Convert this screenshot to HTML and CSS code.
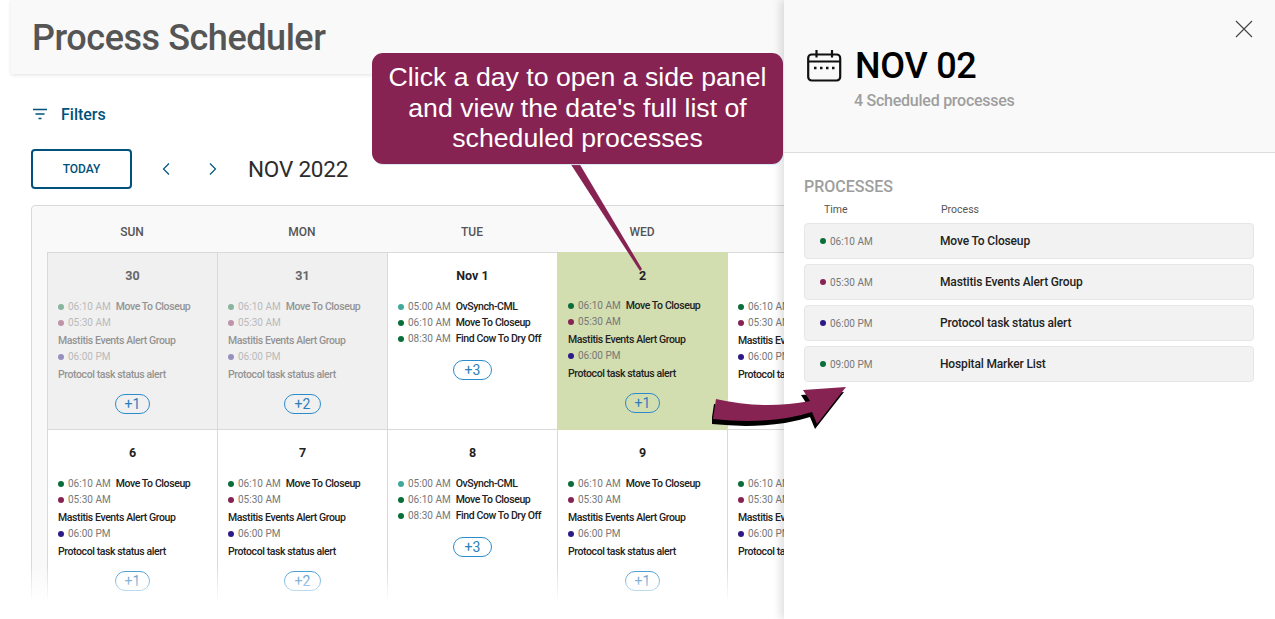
FILE: index.html
```html
<!DOCTYPE html>
<html lang="en">
<head>
    <meta charset="UTF-8">
    <title>Process Scheduler</title>
    <link rel="stylesheet" href="styles.css">
</head>
<body>
    <div class="page">
        <header class="page-header">
            <h1>Process Scheduler</h1>
        </header>

        <div class="filters">
            <svg class="filters-icon" width="16" height="12" viewBox="0 0 16 12"><path d="M1 1.500h14M3.500 6h9M6.500 10.500h3" stroke="#00527c" stroke-width="1.500" fill="none"/></svg>
            <span>Filters</span>
        </div>

        <div class="toolbar">
            <button class="today-button">TODAY</button>
            <svg class="chevron chevron-prev" width="8" height="14" viewBox="0 0 8 14"><path d="M7 1.500 1.500 7 7 12.500" stroke="#00527c" stroke-width="1.200" fill="none"/></svg>
            <svg class="chevron chevron-next" width="8" height="14" viewBox="0 0 8 14"><path d="M1 1.500 6.500 7 1 12.500" stroke="#00527c" stroke-width="1.200" fill="none"/></svg>
            <span class="month-label">NOV 2022</span>
        </div>

        <div class="calendar">
            <div class="weekdays">
                <div>SUN</div>
                <div>MON</div>
                <div>TUE</div>
                <div>WED</div>
                <div>THU</div>
            </div>
            <div class="days">
                <div class="day day-muted">
                    <div class="day-number">30</div>
                    <div class="entry"><i class="dot dot-green"></i><span class="time">06:10 AM</span><span class="name">Move To Closeup</span></div>
                    <div class="entry"><i class="dot dot-wine"></i><span class="time">05:30 AM</span><span class="name name-wrapped">Mastitis Events Alert Group</span></div>
                    <div class="entry"><i class="dot dot-indigo"></i><span class="time">06:00 PM</span><span class="name name-wrapped">Protocol task status alert</span></div>
                    <div class="more"><span>+1</span></div>
                </div>
                <div class="day day-muted">
                    <div class="day-number">31</div>
                    <div class="entry"><i class="dot dot-green"></i><span class="time">06:10 AM</span><span class="name">Move To Closeup</span></div>
                    <div class="entry"><i class="dot dot-wine"></i><span class="time">05:30 AM</span><span class="name name-wrapped">Mastitis Events Alert Group</span></div>
                    <div class="entry"><i class="dot dot-indigo"></i><span class="time">06:00 PM</span><span class="name name-wrapped">Protocol task status alert</span></div>
                    <div class="more more-two"><span>+2</span></div>
                </div>
                <div class="day">
                    <div class="day-number">Nov 1</div>
                    <div class="entry"><i class="dot dot-teal"></i><span class="time">05:00 AM</span><span class="name">OvSynch-CML</span></div>
                    <div class="entry"><i class="dot dot-green"></i><span class="time">06:10 AM</span><span class="name">Move To Closeup</span></div>
                    <div class="entry"><i class="dot dot-green"></i><span class="time">08:30 AM</span><span class="name">Find Cow To Dry Off</span></div>
                    <div class="more more-short"><span>+3</span></div>
                </div>
                <div class="day day-selected">
                    <div class="day-number">2</div>
                    <div class="entry"><i class="dot dot-green"></i><span class="time">06:10 AM</span><span class="name">Move To Closeup</span></div>
                    <div class="entry"><i class="dot dot-wine"></i><span class="time">05:30 AM</span><span class="name name-wrapped">Mastitis Events Alert Group</span></div>
                    <div class="entry"><i class="dot dot-indigo"></i><span class="time">06:00 PM</span><span class="name name-wrapped">Protocol task status alert</span></div>
                    <div class="more"><span>+1</span></div>
                </div>
                <div class="day">
                    <div class="day-number">3</div>
                    <div class="entry"><i class="dot dot-green"></i><span class="time">06:10 AM</span><span class="name">Move To Closeup</span></div>
                    <div class="entry"><i class="dot dot-wine"></i><span class="time">05:30 AM</span><span class="name name-wrapped">Mastitis Events Alert Group</span></div>
                    <div class="entry"><i class="dot dot-indigo"></i><span class="time">06:00 PM</span><span class="name name-wrapped">Protocol task status alert</span></div>
                    <div class="more"><span>+1</span></div>
                </div>

                <div class="day">
                    <div class="day-number">6</div>
                    <div class="entry"><i class="dot dot-green"></i><span class="time">06:10 AM</span><span class="name">Move To Closeup</span></div>
                    <div class="entry"><i class="dot dot-wine"></i><span class="time">05:30 AM</span><span class="name name-wrapped">Mastitis Events Alert Group</span></div>
                    <div class="entry"><i class="dot dot-indigo"></i><span class="time">06:00 PM</span><span class="name name-wrapped">Protocol task status alert</span></div>
                    <div class="more"><span>+1</span></div>
                </div>
                <div class="day">
                    <div class="day-number">7</div>
                    <div class="entry"><i class="dot dot-green"></i><span class="time">06:10 AM</span><span class="name">Move To Closeup</span></div>
                    <div class="entry"><i class="dot dot-wine"></i><span class="time">05:30 AM</span><span class="name name-wrapped">Mastitis Events Alert Group</span></div>
                    <div class="entry"><i class="dot dot-indigo"></i><span class="time">06:00 PM</span><span class="name name-wrapped">Protocol task status alert</span></div>
                    <div class="more more-two"><span>+2</span></div>
                </div>
                <div class="day">
                    <div class="day-number">8</div>
                    <div class="entry"><i class="dot dot-teal"></i><span class="time">05:00 AM</span><span class="name">OvSynch-CML</span></div>
                    <div class="entry"><i class="dot dot-green"></i><span class="time">06:10 AM</span><span class="name">Move To Closeup</span></div>
                    <div class="entry"><i class="dot dot-green"></i><span class="time">08:30 AM</span><span class="name">Find Cow To Dry Off</span></div>
                    <div class="more more-short"><span>+3</span></div>
                </div>
                <div class="day">
                    <div class="day-number">9</div>
                    <div class="entry"><i class="dot dot-green"></i><span class="time">06:10 AM</span><span class="name">Move To Closeup</span></div>
                    <div class="entry"><i class="dot dot-wine"></i><span class="time">05:30 AM</span><span class="name name-wrapped">Mastitis Events Alert Group</span></div>
                    <div class="entry"><i class="dot dot-indigo"></i><span class="time">06:00 PM</span><span class="name name-wrapped">Protocol task status alert</span></div>
                    <div class="more"><span>+1</span></div>
                </div>
                <div class="day">
                    <div class="day-number">10</div>
                    <div class="entry"><i class="dot dot-green"></i><span class="time">06:10 AM</span><span class="name">Move To Closeup</span></div>
                    <div class="entry"><i class="dot dot-wine"></i><span class="time">05:30 AM</span><span class="name name-wrapped">Mastitis Events Alert Group</span></div>
                    <div class="entry"><i class="dot dot-indigo"></i><span class="time">06:00 PM</span><span class="name name-wrapped">Protocol task status alert</span></div>
                    <div class="more"><span>+1</span></div>
                </div>
            </div>
        </div>
        <div class="bottom-fade"></div>

        <aside class="side-panel">
            <div class="panel-header">
                <svg class="panel-close" width="18" height="18" viewBox="0 0 18 18"><path d="M1 1l16 16M17 1 1 17" stroke="#444" stroke-width="1.100" fill="none"/></svg>
                <div class="panel-title">
                    <svg class="panel-icon" width="35" height="32" viewBox="0 0 35 32"><rect x="1.200" y="4.500" width="32" height="26" rx="3.500" stroke="#111" stroke-width="2.200" fill="none"/><path d="M1.200 11.500h32M9.500 0v7.500M25 0v7.500" stroke="#111" stroke-width="2.200" fill="none"/><path d="M7 18h2.500M13 18h2.500M19 18h2.500M25 18h2.500" stroke="#111" stroke-width="2.400" fill="none"/></svg>
                    <span>NOV 02</span>
                </div>
                <div class="panel-subtitle">4 Scheduled processes</div>
            </div>
            <div class="panel-body">
                <h2>PROCESSES</h2>
                <div class="process-head">
                    <span class="process-head-time">Time</span>
                    <span>Process</span>
                </div>
                <div class="process-row"><i class="dot dot-green"></i><span class="time">06:10 AM</span><span class="process-name">Move To Closeup</span></div>
                <div class="process-row"><i class="dot dot-wine"></i><span class="time">05:30 AM</span><span class="process-name">Mastitis Events Alert Group</span></div>
                <div class="process-row"><i class="dot dot-indigo"></i><span class="time">06:00 PM</span><span class="process-name">Protocol task status alert</span></div>
                <div class="process-row"><i class="dot dot-green"></i><span class="time">09:00 PM</span><span class="process-name">Hospital Marker List</span></div>
            </div>
        </aside>

        <!-- callout and arrow sit on top of everything -->
        <svg class="callout-tail" width="90" height="120" viewBox="0 0 90 120"><path d="M0 0H9L72 106 70 108Z" fill="#862353"/></svg>
        <div class="callout">Click a day to open a side panel and view the date's full list of scheduled processes</div>
        <svg class="arrow" width="140" height="50" viewBox="0 0 140 50">
            <path d="M4 14Q51 25 98 16L91 5 134 2 105 39 100 27Q59 40 1 34Z" fill="#000" transform="translate(-2 5)"/>
            <path d="M4 14Q51 25 98 16L91 5 134 2 105 39 100 27Q59 40 1 34Z" fill="#862353"/>
        </svg>
    </div>
</body>
</html>
```

FILE: styles.css
```css
body {
    margin: 0;
    background: #fff;
    font-family: Roboto, "Liberation Sans", sans-serif;
    color: #222;
}
.page {
    position: relative;
    width: 1275px;
    height: 619px;
    overflow: hidden;
}

/* page header */
.page-header {
    box-sizing: border-box;
    height: 74px;
    margin-left: 11px;
    padding: 2px 0 0 21px;
    display: flex;
    align-items: center;
    background: #f9f9f9;
    box-shadow: 0 1px 4px rgba(0, 0, 0, 0.12);
}
.page-header h1 {
    margin: 0;
    font-size: 36px;
    font-weight: 500;
    letter-spacing: -0.45px;
    color: #555;
}

.filters {
    display: flex;
    align-items: center;
    gap: 13px;
    margin: 29px 0 0 32px;
    height: 22px;
    font-size: 16px;
    font-weight: 500;
    color: #00527c;
}
.toolbar {
    display: flex;
    align-items: center;
    margin: 24px 0 0 31px;
    height: 40px;
}
.today-button {
    width: 101px;
    height: 40px;
    padding: 0;
    background: #fff;
    border: 2px solid #00527c;
    border-radius: 4px;
    font-family: inherit;
    font-size: 12px;
    font-weight: 500;
    color: #00527c;
}
.chevron-prev { margin-left: 30px; }
.chevron-next { margin-left: 39px; }
.month-label {
    margin-left: 31px;
    font-size: 22.500px;
    letter-spacing: -0.2px;
    color: #2c2c2c;
}

/* calendar */
.calendar {
    margin: 16px 0 0 31px;
    padding: 0 0 0 15px;
    background: #f9f9f9;
    border: 1px solid #d9d9d9;
    border-radius: 4px;
}
.weekdays {
    box-sizing: border-box;
    display: grid;
    grid-template-columns: repeat(5, 170px);
    height: 46px;
    padding-top: 6px;
    align-items: center;
    text-align: center;
    font-size: 12px;
    font-weight: 500;
    color: #555;
}
.days {
    display: grid;
    grid-template-columns: repeat(5, 170px);
    grid-auto-rows: 177px;
    border-top: 1px solid #d9d9d9;
    border-left: 1px solid #d9d9d9;
    background: #fff;
}
.day {
    box-sizing: border-box;
    padding: 15px 10px 0;
    border-right: 1px solid #d9d9d9;
    border-bottom: 1px solid #d9d9d9;
}
.day-number {
    height: 16px;
    line-height: 16px;
    margin-bottom: 15px;
    text-align: center;
    font-size: 12.500px;
    font-weight: 700;
    color: #222;
}
.day-muted { background: #f0f0f0; }
.day-muted .day-number { color: #666; }
.day-muted .entry { opacity: 0.45; }
.day-selected {
    background: #d2ddb0;
    margin: -1px 0 0 -1px;
    padding: 16px 10px 0 11px;
    border-color: #d2ddb0;
}
.day-selected .day-number { margin-bottom: 14px; }
.entry {
    display: flex;
    flex-wrap: wrap;
    align-items: center;
    line-height: 16px;
}
.dot {
    display: inline-block;
    flex: none;
    width: 6px;
    height: 6px;
    margin-right: 4px;
    border-radius: 50%;
}
.dot-green { background: #0a6e3a; }
.dot-wine { background: #862353; }
.dot-indigo { background: #2e1a87; }
.dot-teal { background: #41a999; }
.time {
    color: #777;
    font-size: 10px;
    margin-right: 5px;
}
.name {
    font-size: 10.500px;
    font-weight: 500;
    letter-spacing: -0.4px;
    white-space: nowrap;
}
.name-wrapped {
    width: 100%;
    line-height: 18px;
    padding-top: 1px;
    margin-bottom: -1px;
}
.more {
    margin-top: 11px;
    text-align: center;
}
.more-short { margin-top: 13px; }
.more span {
    display: inline-block;
    box-sizing: border-box;
    width: 35px;
    height: 20px;
    line-height: 18px;
    border: 1px solid #2b8ccc;
    border-radius: 10px;
    font-size: 14px;
    color: #2b7fbd;
}
.more-two span { width: 37px; }
.more-short span { width: 39px; }
.bottom-fade {
    position: absolute;
    left: 0;
    right: 0;
    top: 565px;
    height: 54px;
    background: linear-gradient(to bottom, rgba(255, 255, 255, 0), #fff 70%);
}

/* side panel */
.side-panel {
    position: absolute;
    top: 0;
    right: 0;
    bottom: 0;
    width: 491px;
    background: #fff;
    box-shadow: -4px 0 8px rgba(0, 0, 0, 0.12);
}
.panel-header {
    position: relative;
    box-sizing: border-box;
    height: 153px;
    padding: 48px 0 0 23px;
    background: #f9f9f9;
    border-bottom: 1px solid #ddd;
}
.panel-close {
    position: absolute;
    top: 20px;
    right: 22px;
}
.panel-title {
    display: flex;
    align-items: center;
    gap: 13px;
    height: 36px;
    font-size: 36px;
    font-weight: 500;
    letter-spacing: -0.25px;
    color: #000;
}
.panel-subtitle {
    margin: 7px 0 0 47px;
    font-size: 16px;
    font-weight: 500;
    letter-spacing: -0.25px;
    color: #9e9e9e;
}
.panel-body {
    padding: 24px 21px 0 20px;
}
.panel-body h2 {
    margin: 0;
    height: 20px;
    line-height: 20px;
    font-size: 16px;
    font-weight: 500;
    color: #9e9e9e;
}
.process-head {
    display: flex;
    height: 26px;
    padding-bottom: 2px;
    box-sizing: border-box;
    align-items: center;
    font-size: 10.500px;
    color: #555;
}
.process-head-time {
    width: 117px;
    margin-left: 20px;
}
.process-row {
    display: flex;
    align-items: center;
    box-sizing: border-box;
    height: 36px;
    margin-bottom: 5px;
    padding-left: 15px;
    background: #f2f2f2;
    border: 1px solid #e6e6e6;
    border-radius: 4px;
}
.process-row .time {
    width: 110px;
    margin: 0;
}
.process-name {
    font-size: 12px;
    font-weight: 500;
    letter-spacing: -0.15px;
    color: #222;
}

/* callout over the page */
.callout {
    position: absolute;
    top: 53px;
    left: 372px;
    box-sizing: border-box;
    width: 411px;
    height: 111px;
    padding: 9px 10px 0;
    background: #862353;
    border-radius: 11px;
    box-shadow: 1px 1px 1px #d5e8f6;
    font-family: "Liberation Sans", Arial, sans-serif;
    font-size: 26.670px;
    line-height: 30.500px;
    text-align: center;
    color: #fff;
}
.callout-tail {
    position: absolute;
    top: 163px;
    left: 570px;
}
.arrow {
    position: absolute;
    top: 385px;
    left: 712px;
}
```
